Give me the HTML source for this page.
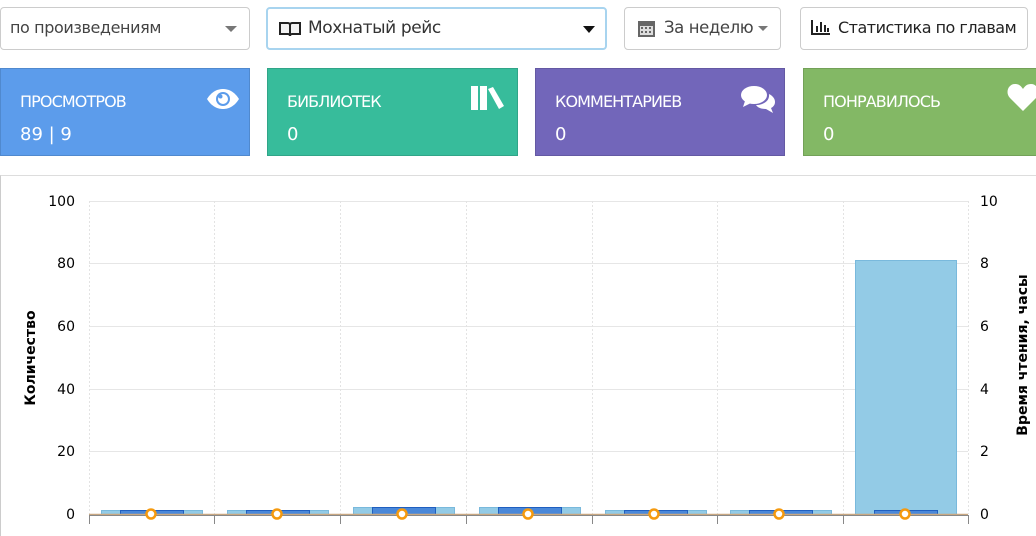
<!DOCTYPE html><html><head><meta charset="utf-8"><style>
body{margin:0;width:1036px;height:524px;overflow:hidden;background:#fff;font-family:"DejaVu Sans","Liberation Sans",sans-serif;position:relative}
.b{position:absolute;box-sizing:border-box;border:1px solid #ccc;border-radius:4px;background:#fff;font-size:16px;color:#444;letter-spacing:-0.4px;line-height:40px;height:43px;top:7px}
.card{position:absolute;top:68px;height:88px;color:#fff;box-sizing:border-box;border:1px solid rgba(0,0,0,.12)}
.card .t{position:absolute;left:19px;top:23px;font-size:16px;letter-spacing:-0.9px}
.card .v{position:absolute;left:19px;top:55px;font-size:18px}
.card svg{position:absolute}
</style></head><body>
<div class="b" style="left:0;width:250px;padding-left:9px">по произведениям<span style="position:absolute;right:12px;top:18px;border:6px solid transparent;border-top:6px solid #777;border-bottom:0"></span></div>
<div class="b" style="left:266px;width:341px;padding-left:40px;border:2px solid #a8d4ef;color:#333;line-height:39px;font-size:17px">
<svg style="position:absolute;left:11px;top:12px" width="22" height="16" viewBox="0 0 22 16"><path d="M1 2h8a2 2 0 0 1 2 2v11a2 2 0 0 0-2-2H1zM21 2h-8a2 2 0 0 0-2 2v11a2 2 0 0 1 2-2h8z" fill="#f3f3f3" stroke="#222" stroke-width="2"/></svg>
Мохнатый рейс<span style="position:absolute;right:10px;top:17px;border:6px solid transparent;border-top:7px solid #111;border-bottom:0"></span></div>
<div class="b" style="left:624px;width:157px;padding-left:39px;font-size:16.5px">
<svg style="position:absolute;left:13px;top:11px" width="17" height="18" viewBox="0 0 17 18"><rect x="0" y="2" width="17" height="16" fill="#666"/><rect x="2" y="7" width="13" height="9" fill="#ddd"/><g fill="#666"><rect x="3" y="8" width="2" height="2"/><rect x="7" y="8" width="2" height="2"/><rect x="11" y="8" width="2" height="2"/><rect x="3" y="12" width="2" height="2"/><rect x="7" y="12" width="2" height="2"/><rect x="11" y="12" width="2" height="2"/></g></svg>
За неделю<span style="position:absolute;right:12px;top:18px;border:5px solid transparent;border-top:5px solid #777;border-bottom:0"></span></div>
<div class="b" style="left:800px;width:228px;padding-left:37px;color:#222;font-size:16px;letter-spacing:-0.5px">
<svg style="position:absolute;left:10px;top:11px" width="20" height="16" viewBox="0 0 20 16"><path d="M1 1v14h18" stroke="#222" stroke-width="2" fill="none"/><rect x="5" y="7" width="2" height="6" fill="#222"/><rect x="9" y="3" width="2" height="10" fill="#222"/><rect x="13" y="6" width="2" height="7" fill="#222"/><rect x="16" y="9" width="2" height="4" fill="#222"/></svg>
Статистика по главам</div>

<div class="card" style="left:0;width:250px;background:#5c9ceb"><div class="t">ПРОСМОТРОВ</div><div class="v">89 | 9</div>
<svg style="left:205px;top:19px" width="34" height="22" viewBox="0 0 34 22"><path d="M1 11C6 3 12 1 17 1s11 2 16 10c-5 8-11 10-16 10S6 19 1 11z" fill="#fff"/><circle cx="17" cy="11" r="7" fill="#5c9ceb"/><circle cx="17" cy="11" r="5" fill="#fff"/><circle cx="14.5" cy="8.5" r="2" fill="#5c9ceb"/></svg></div>
<div class="card" style="left:267px;width:251px;background:#37bc9b"><div class="t">БИБЛИОТЕК</div><div class="v">0</div>
<svg style="left:203px;top:17px" width="34" height="24" viewBox="0 0 34 24"><rect x="0" y="0" width="7" height="24" fill="#fff"/><rect x="9" y="0" width="7" height="24" fill="#fff"/><path d="M17 3l5-2 11 19-5 3z" fill="#fff"/></svg></div>
<div class="card" style="left:535px;width:250px;background:#7266ba"><div class="t">КОММЕНТАРИЕВ</div><div class="v">0</div>
<svg style="left:205px;top:17px" width="34" height="28" viewBox="0 0 34 28"><ellipse cx="13" cy="9" rx="13" ry="9" fill="#fff"/><path d="M4 15l-2 6 8-4z" fill="#fff"/><path d="M28 8c4 2 6 5 6 8 0 3-2 5-4 6l2 5-7-4c-4 0-8-1-10-4 7 0 14-4 13-11z" fill="#fff"/></svg></div>
<div class="card" style="left:803px;width:240px;background:#83b865"><div class="t">ПОНРАВИЛОСЬ</div><div class="v">0</div>
<svg style="left:203px;top:14px" width="32" height="28" viewBox="0 0 32 28"><path d="M16 28L3 15C-2 10 1 1 8 1c4 0 6 2 8 5 2-3 4-5 8-5 7 0 10 9 5 14z" fill="#fff"/></svg></div>

<div style="position:absolute;left:0;top:175px;width:1036px;height:360px;border-top:1px solid #ddd;border-left:1px solid #ccc"></div>
<svg style="position:absolute;left:0;top:0" width="1036" height="524" font-family="DejaVu Sans, Liberation Sans, sans-serif" font-size="14">
<g stroke="#e6e6e6" stroke-width="1">
<line x1="89" y1="201.5" x2="968" y2="201.5"/><line x1="89" y1="263.5" x2="968" y2="263.5"/><line x1="89" y1="326.5" x2="968" y2="326.5"/><line x1="89" y1="389.5" x2="968" y2="389.5"/><line x1="89" y1="451.5" x2="968" y2="451.5"/>
</g>
<g stroke="#e3e3e3" stroke-dasharray="2,2">
<line x1="89.5" y1="201" x2="89.5" y2="514"/><line x1="214.5" y1="201" x2="214.5" y2="514"/><line x1="340.5" y1="201" x2="340.5" y2="514"/><line x1="466.5" y1="201" x2="466.5" y2="514"/><line x1="592.5" y1="201" x2="592.5" y2="514"/><line x1="717.5" y1="201" x2="717.5" y2="514"/><line x1="843.5" y1="201" x2="843.5" y2="514"/><line x1="968.5" y1="201" x2="968.5" y2="514"/>
</g>
<g fill="#93cbe6" stroke="#79b9dc">
<rect x="101.5" y="510.5" width="101" height="4"/><rect x="227.5" y="510.5" width="101" height="4"/><rect x="353.5" y="507.5" width="101" height="7"/><rect x="479.5" y="507.5" width="101" height="7"/><rect x="605.5" y="510.5" width="101" height="4"/><rect x="730.5" y="510.5" width="101" height="4"/><rect x="855.5" y="260.5" width="101" height="254"/>
</g>
<g fill="#4a88d9" stroke="#1f5fc0">
<rect x="120.5" y="510.5" width="63" height="4"/><rect x="246.5" y="510.5" width="63" height="4"/><rect x="372.5" y="507.5" width="63" height="7"/><rect x="498.5" y="507.5" width="63" height="7"/><rect x="624.5" y="510.5" width="63" height="4"/><rect x="749.5" y="510.5" width="63" height="4"/><rect x="874.5" y="510.5" width="63" height="4"/>
</g>
<line x1="89" y1="514.5" x2="968" y2="514.5" stroke="#c9a882" stroke-width="1.5"/>
<line x1="89" y1="515.5" x2="968" y2="515.5" stroke="#888"/>
<g stroke="#888"><line x1="89.5" y1="515" x2="89.5" y2="524"/><line x1="214.5" y1="515" x2="214.5" y2="524"/><line x1="340.5" y1="515" x2="340.5" y2="524"/><line x1="466.5" y1="515" x2="466.5" y2="524"/><line x1="592.5" y1="515" x2="592.5" y2="524"/><line x1="717.5" y1="515" x2="717.5" y2="524"/><line x1="843.5" y1="515" x2="843.5" y2="524"/><line x1="968.5" y1="515" x2="968.5" y2="524"/></g>
<g fill="#fff" stroke="#f59a0f" stroke-width="2.5">
<circle cx="151" cy="514" r="4.5"/><circle cx="277" cy="514" r="4.5"/><circle cx="402" cy="514" r="4.5"/><circle cx="528" cy="514" r="4.5"/><circle cx="654" cy="514" r="4.5"/><circle cx="779" cy="514" r="4.5"/><circle cx="905" cy="514" r="4.5"/>
</g>
<g fill="#000" text-anchor="end">
<text x="75" y="206">100</text><text x="75" y="268">80</text><text x="75" y="331">60</text><text x="75" y="394">40</text><text x="75" y="456">20</text><text x="75" y="519">0</text>
</g>
<g fill="#000">
<text x="980" y="206">10</text><text x="980" y="268">8</text><text x="980" y="331">6</text><text x="980" y="394">4</text><text x="980" y="456">2</text><text x="980" y="519">0</text>
</g>
<text transform="translate(35,358) rotate(-90)" text-anchor="middle" font-size="14" font-weight="bold" fill="#000">Количество</text>
<text transform="translate(1027,355) rotate(-90)" text-anchor="middle" font-size="14" font-weight="bold" fill="#000">Время чтения, часы</text>
</svg>
</body></html>
